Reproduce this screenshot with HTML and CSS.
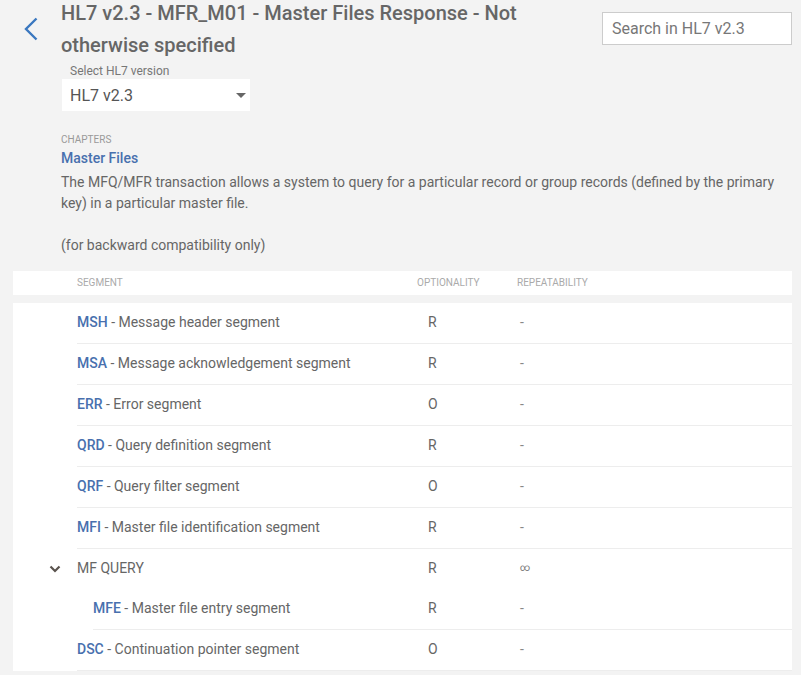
FILE: index.html
```html
<!DOCTYPE html>
<html lang="en">
<head>
<meta charset="utf-8">
<title>HL7 v2.3 - MFR_M01</title>
<link rel="stylesheet" href="styles.css">
</head>
<body>
<div class="page">
  <div class="top">
    <div class="back">
      <svg width="14" height="24" viewBox="0 0 14 24"><polyline points="12.5,1.5 2,12 12.5,22.5" fill="none" stroke="#3a77bf" stroke-width="2.4"/></svg>
    </div>
    <h1 class="title">HL7 v2.3 - MFR_M01 - Master Files Response - Not otherwise specified</h1>
    <div class="search">Search in HL7 v2.3</div>
  </div>
  <div class="info">
    <div class="field-label">Select HL7 version</div>
    <div class="select"><span>HL7 v2.3</span><span class="caret"></span></div>
    <div class="chapters">CHAPTERS</div>
    <div class="chapter-name">Master Files</div>
    <p class="desc">The MFQ/MFR transaction allows a system to query for a particular record or group records (defined by the primary key) in a particular master file.<br><br>(for backward compatibility only)</p>
  </div>

  <div class="thead">
    <div></div>
    <div>Segment</div>
    <div>Optionality</div>
    <div>Repeatability</div>
  </div>

  <div class="tbody">
    <div class="row"><div class="lead"></div><div class="seg"><b>MSH</b> - Message header segment</div><div class="opt">R</div><div class="rep">-</div></div>
    <div class="row"><div class="lead"></div><div class="seg"><b>MSA</b> - Message acknowledgement segment</div><div class="opt">R</div><div class="rep">-</div></div>
    <div class="row"><div class="lead"></div><div class="seg"><b>ERR</b> - Error segment</div><div class="opt">O</div><div class="rep">-</div></div>
    <div class="row"><div class="lead"></div><div class="seg"><b>QRD</b> - Query definition segment</div><div class="opt">R</div><div class="rep">-</div></div>
    <div class="row"><div class="lead"></div><div class="seg"><b>QRF</b> - Query filter segment</div><div class="opt">O</div><div class="rep">-</div></div>
    <div class="row"><div class="lead"></div><div class="seg"><b>MFI</b> - Master file identification segment</div><div class="opt">R</div><div class="rep">-</div></div>
    <div class="row group"><div class="lead"><svg width="12" height="8" viewBox="0 0 12 8"><polyline points="1.5,1.5 6,6 10.5,1.5" fill="none" stroke="#5a534e" stroke-width="2.2"/></svg></div><div class="seg">MF QUERY</div><div class="opt">R</div><div class="rep inf">&#8734;</div></div>
    <div class="row nested"><div class="lead"></div><div class="seg"><b>MFE</b> - Master file entry segment</div><div class="opt">R</div><div class="rep">-</div></div>
    <div class="row"><div class="lead"></div><div class="seg"><b>DSC</b> - Continuation pointer segment</div><div class="opt">O</div><div class="rep">-</div></div>
  </div>
</div>
</body>
</html>
```

FILE: styles.css
```css
* { box-sizing: border-box; }
html, body { margin: 0; padding: 0; }
body {
  background: #f3f3f3;
  font-family: Roboto, "Liberation Sans", Arial, sans-serif;
  color: #666;
}
.page { padding: 0 9px 4px 13px; }

.top { display: flex; align-items: flex-start; }
.back { width: 48px; padding: 17px 0 0 11px; flex: none; }
.back svg { display: block; }
.title {
  flex: 1;
  min-width: 0;
  margin: -3px 12px 0 0;
  font-size: 20px;
  line-height: 32px;
  font-weight: 500;
  color: #666;
}
.search {
  flex: none;
  margin-top: 12px;
  width: 190px;
  height: 33px;
  background: #fff;
  border: 1px solid #ccc;
  padding: 0 9px;
  display: flex;
  align-items: center;
  font-size: 16px;
  color: #777;
}

.info { margin-left: 48px; }
.field-label {
  margin: 3px 0 0 9px;
  font-size: 12px;
  line-height: 15px;
  color: #777;
}
.select {
  margin-left: 1px;
  width: 188px;
  height: 32px;
  background: #fff;
  display: flex;
  align-items: center;
  justify-content: space-between;
  padding: 0 4px 0 8px;
  font-size: 16px;
  color: #555;
}
.caret {
  width: 0; height: 0;
  border-left: 5px solid transparent;
  border-right: 5px solid transparent;
  border-top: 5px solid #666;
}
.chapters {
  margin-top: 21px;
  font-size: 10px;
  line-height: 15px;
  color: #999;
  text-transform: uppercase;
}
.chapter-name {
  margin-top: 1px;
  font-size: 14px;
  line-height: 21px;
  font-weight: 500;
  color: #4870ae;
}
.desc {
  margin: 3px 0 0 0;
  font-size: 14px;
  line-height: 21px;
  color: #666;
}

.thead {
  margin-top: 15px;
  height: 24px;
  background: #fff;
  display: grid;
  grid-template-columns: 64px 340px 100px 1fr;
  align-items: center;
  font-size: 10px;
  line-height: 24px;
  color: #aaa;
  text-transform: uppercase;
}

.tbody { margin-top: 8px; background: #fff; }
.row {
  display: grid;
  grid-template-columns: 64px 340px 100px 1fr;
  font-size: 14px;
  line-height: 16px;
}
.row.nested { grid-template-columns: 80px 324px 100px 1fr; }
.row > div { padding: 11px 0 13px 0; border-bottom: 1px solid #ededed; }
.row > .lead { border-bottom: none; }
.row.group > div { border-bottom: none; }
.row.group .lead {
  display: flex;
  justify-content: flex-end;
  align-items: center;
  padding: 0 16px 0 0;
}
.row.group .lead svg { display: block; }
.seg { color: #666; }
.seg b { font-weight: 500; color: #4870ae; }
.opt { padding-left: 11px !important; color: #666; }
.rep { padding-left: 3px !important; color: #888; }
.rep.inf { font-size: 10px; color: #777; }
```
